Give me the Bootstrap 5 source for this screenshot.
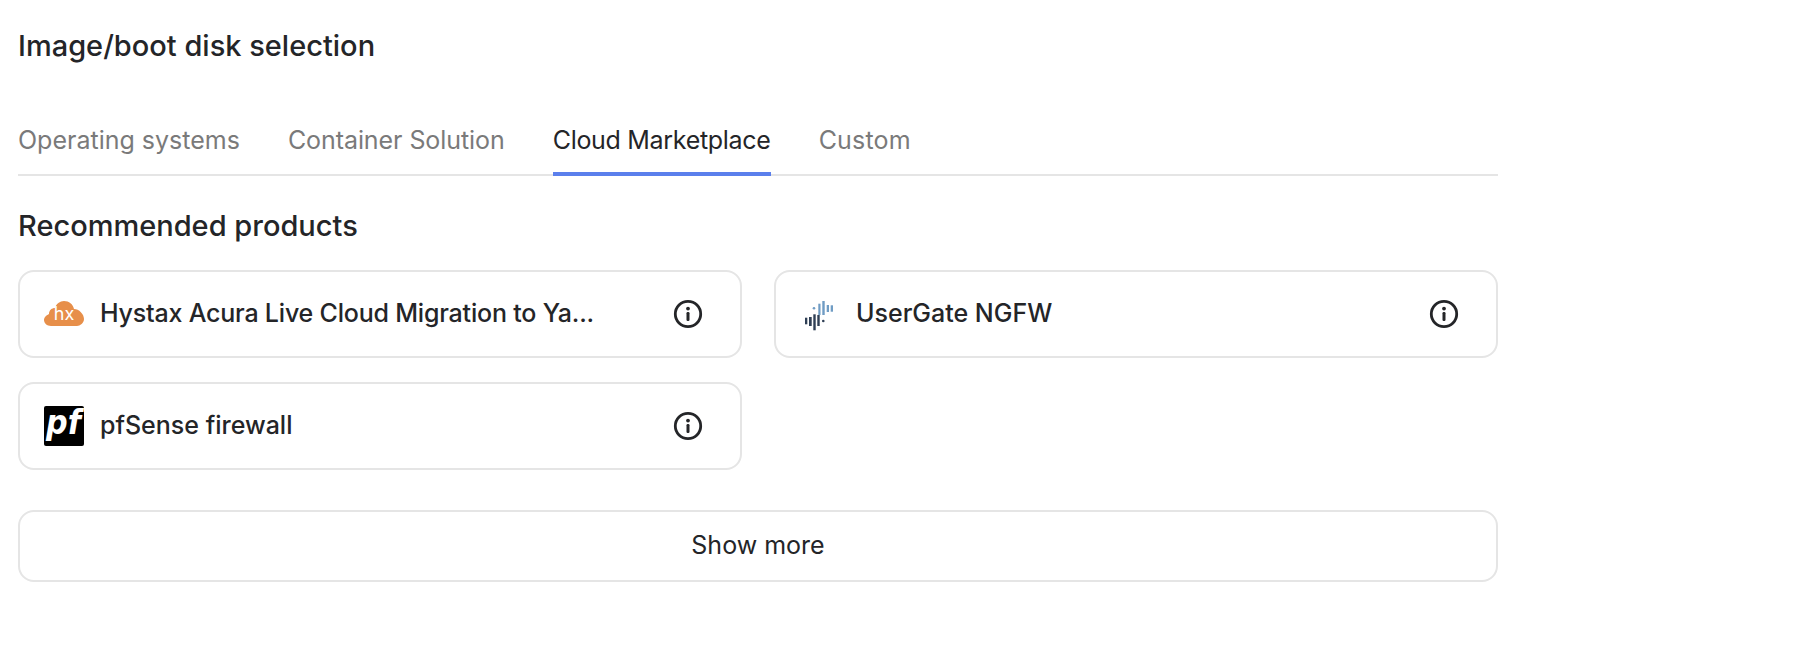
<!DOCTYPE html>
<html lang="en"><head><meta charset="utf-8"><title>Image/boot disk selection</title>
<link href="https://cdn.jsdelivr.net/npm/bootstrap@5.3.0/dist/css/bootstrap.min.css" rel="stylesheet">
<style>
body{font-family:Inter,"Liberation Sans",sans-serif;color:#242528;background:#fff}
.pane{width:1480px;margin-left:18px}
.head-title{font-size:29px;font-weight:520;line-height:36px;margin:28px 0 0}
.tab-row{gap:48px;margin-top:59px;border-bottom:2px solid #e5e5e5}
.tab-item{font-size:25px;line-height:34px;color:#7a7a7a;padding-bottom:15px;margin-bottom:-2px;border-bottom:4px solid transparent;text-decoration:none}
.tab-item.tab-two{letter-spacing:-.07px}
.tab-item.tab-on{color:#242528;border-bottom-color:#5b7fec;letter-spacing:-.3px}
.tab-item.tab-four{letter-spacing:.2px}
.sub-title{font-size:29px;font-weight:520;line-height:36px;margin:32px 0 0}
.prod-grid{display:grid;grid-template-columns:724px 724px;column-gap:32px;row-gap:24px;margin-top:26px}
.prod-card{height:88px;border:2px solid #e5e5e5;border-radius:16px;padding:0 37px 0 24px;gap:16px}
.prod-name{font-size:25px;font-weight:520;white-space:nowrap}
.name-long{letter-spacing:-.2px}
.prod-logo{width:40px;height:40px;flex:none;overflow:visible}
.info-ico{width:30px;height:30px;flex:none;margin-left:auto}
.more-btn{width:100%;height:72px;margin-top:40px;border:2px solid #e5e5e5;border-radius:16px;font-size:25px;color:#242528;background:#fff;display:block}
.logo-hx{font-family:Inter,sans-serif;font-size:18px;font-weight:400;fill:#fff}
.logo-pf{font-family:"DejaVu Sans",sans-serif;font-size:28px;font-weight:700;font-style:italic;fill:#fff}
</style></head>
<body>
<div class="pane">
<h1 class="head-title">Image/boot disk selection</h1>
<nav class="d-flex tab-row">
<a class="tab-item" href="#">Operating systems</a>
<a class="tab-item tab-two" href="#">Container Solution</a>
<a class="tab-item tab-on" href="#">Cloud Marketplace</a>
<a class="tab-item tab-four" href="#">Custom</a>
</nav>
<h2 class="sub-title">Recommended products</h2>
<div class="prod-grid">
<div class="prod-card d-flex align-items-center">
<svg class="prod-logo" viewBox="0 0 40 40"><path fill="#e78f4a" d="M7 32C3 32 0 29 0 26 0 23 3 21 5 20 5 16 8 14 11 14 12 10 16 7 20 7 25 7 29 10 30 15 35 15 40 20 40 25 40 29 36 32 33 32Z"/><text x="20" y="26" text-anchor="middle" class="logo-hx">hx</text></svg>
<span class="prod-name name-long">Hystax Acura Live Cloud Migration to Ya...</span>
<svg class="info-ico" viewBox="0 0 30 30"><circle cx="15" cy="15" r="12.700" fill="none" stroke="#242528" stroke-width="2.800"/><circle cx="15" cy="9.600" r="1.900" fill="#242528"/><rect x="13.500" y="13" width="3" height="9" rx="1.200" fill="#242528"/></svg>
</div>
<div class="prod-card d-flex align-items-center">
<svg class="prod-logo" viewBox="0 0 40 40"><g fill="#2f3f55"><rect x="5" y="23.700" width="2.300" height="6.600"/><rect x="9" y="23" width="2.700" height="9"/><rect x="13.300" y="20.300" width="2.400" height="16"/><rect x="17.300" y="21" width="2.400" height="11"/><circle cx="23.300" cy="27" r="1.300"/></g><g fill="#6f9cc4"><circle cx="14" cy="14.300" r="1.300"/><rect x="18.300" y="9.700" width="2.200" height="11.300"/><rect x="22.300" y="7" width="2.400" height="14"/><rect x="26.700" y="11" width="2.300" height="7"/><rect x="30.700" y="11.300" width="2.300" height="6.400"/></g></svg>
<span class="prod-name">UserGate NGFW</span>
<svg class="info-ico" viewBox="0 0 30 30"><circle cx="15" cy="15" r="12.700" fill="none" stroke="#242528" stroke-width="2.800"/><circle cx="15" cy="9.600" r="1.900" fill="#242528"/><rect x="13.500" y="13" width="3" height="9" rx="1.200" fill="#242528"/></svg>
</div>
<div class="prod-card d-flex align-items-center">
<svg class="prod-logo" viewBox="0 0 40 40"><rect width="40" height="40" rx="2" fill="#000"/><text transform="translate(19.500 27.500) scale(1.080 1.200)" text-anchor="middle" class="logo-pf">pf</text></svg>
<span class="prod-name">pfSense firewall</span>
<svg class="info-ico" viewBox="0 0 30 30"><circle cx="15" cy="15" r="12.700" fill="none" stroke="#242528" stroke-width="2.800"/><circle cx="15" cy="9.600" r="1.900" fill="#242528"/><rect x="13.500" y="13" width="3" height="9" rx="1.200" fill="#242528"/></svg>
</div>
</div>
<button class="more-btn" type="button">Show more</button>
</div>
<script src="https://cdn.jsdelivr.net/npm/bootstrap@5.3.0/dist/js/bootstrap.bundle.min.js"></script>
</body></html>
